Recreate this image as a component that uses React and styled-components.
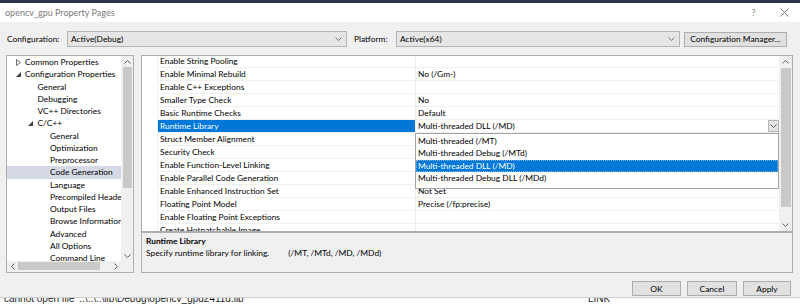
import styled, { createGlobalStyle } from "styled-components"

const GlobalStyle = createGlobalStyle`
  html, body {
    margin: 0;
    padding: 0;
    background: #ffffff;
  }
  body {
    font-family: "Segoe UI", Lato, "Liberation Sans", sans-serif;
    font-size: 8.4px;
    color: #000000;
  }
  * {
    box-sizing: border-box;
  }
`

const Screen = styled.div`
  width: 800px;
  height: 306px;
  overflow: hidden;
  display: flex;
  flex-direction: column;
  background: #ffffff;
`

const HostBar = styled.div`
  flex: none;
  height: 3px;
  background: #2b3649;
`

const Dialog = styled.div`
  flex: none;
  height: 295px;
  display: flex;
  flex-direction: column;
  background: #f0f0f0;
  border-bottom: 1px solid #d2d2d2;
`

const TitleBar = styled.div`
  flex: none;
  height: 19px;
  display: flex;
  align-items: center;
  background: #ffffff;
  padding-left: 5px;
`

const TitleText = styled.div`
  flex: 1;
  font-size: 9px;
  color: #7c7c7c;
`

const TitleButton = styled.div`
  width: 31px;
  height: 19px;
  display: flex;
  align-items: center;
  justify-content: center;
  color: #8a8a8a;
  font-size: 9px;
`

const Body = styled.div`
  flex: 1;
  display: flex;
  flex-direction: column;
  padding: 0 7px 0 6px;
`

const ConfigRow = styled.div`
  flex: none;
  height: 16px;
  margin-top: 9px;
  display: flex;
  align-items: center;
`

const Label = styled.div`
  width: ${p => p.$w}px;
  margin-left: ${p => p.$ml || 0}px;
  padding-left: 1px;
  white-space: nowrap;
`

const Combo = styled.div`
  width: ${p => p.$w}px;
  height: 16px;
  display: flex;
  align-items: center;
  background: #e6e6e6;
  border: 1px solid #b4b4b4;
  padding-left: 3px;
`

const ComboText = styled.div`
  flex: 1;
  white-space: nowrap;
`

const ComboArrow = styled.div`
  width: 16px;
  display: flex;
  justify-content: center;
  align-items: center;
`

const Button = styled.div`
  width: ${p => p.$w}px;
  margin-left: ${p => p.$ml || 0}px;
  height: 15px;
  display: flex;
  align-items: center;
  justify-content: center;
  background: #e1e1e1;
  border: 1px solid #adadad;
  white-space: nowrap;
`

const Main = styled.div`
  flex: none;
  height: 218px;
  margin-top: 8px;
  display: flex;
  gap: 7px;
`

const TreePanel = styled.div`
  width: 128px;
  border: 1px solid #adadad;
  background: #ffffff;
  display: grid;
  grid-template-columns: 1fr 12px;
  grid-template-rows: 1fr 11px;
`

const TreeList = styled.div`
  overflow: hidden;
`

const TreeItem = styled.div`
  height: 12.25px;
  display: flex;
  align-items: center;
  padding-left: ${p => p.$level * 12.5 + 4}px;
  background: ${p => (p.$selected ? "#d6d9e6" : "transparent")};
  white-space: nowrap;
`

const Expander = styled.div`
  width: 14px;
  flex: none;
  display: flex;
  align-items: center;
  justify-content: center;
`

const ScrollV = styled.div`
  display: flex;
  flex-direction: column;
  background: #f0f0f0;
`

const ScrollH = styled.div`
  display: flex;
  align-items: stretch;
  background: #f0f0f0;
`

const ScrollArrow = styled.div`
  flex: none;
  width: ${p => p.$w || "auto"};
  height: ${p => p.$h || "auto"};
  display: flex;
  align-items: center;
  justify-content: center;
`

const Track = styled.div`
  flex: 1;
  display: flex;
  flex-direction: ${p => (p.$horizontal ? "row" : "column")};
`

const Thumb = styled.div`
  flex: none;
  background: #c9c9c9;
  ${p =>
    p.$horizontal
      ? `width: ${p.$size}px; margin: 1px 0 2px 0;`
      : `height: ${p.$size}px; margin: ${p.$offset || 0}px 1px 0 2px;`}
`

const Corner = styled.div`
  background: #f0f0f0;
`

const RightColumn = styled.div`
  flex: 1;
  display: flex;
  flex-direction: column;
`

const GridPanel = styled.div`
  flex: none;
  height: 177px;
  border: 1px solid #adadad;
  background: #ffffff;
  display: flex;
  position: relative;
`

const GridBody = styled.div`
  flex: 1;
  overflow: hidden;
`

const GridRows = styled.div`
  margin-top: -1px;
`

const Row = styled.div`
  height: 13px;
  display: grid;
  grid-template-columns: 15px 258px 1fr;
`

const NameCell = styled.div`
  display: flex;
  align-items: center;
  padding-left: 2px;
  border-left: 1px solid #f0f0f0;
  border-bottom: 1px solid #f0f0f0;
  white-space: nowrap;
  background: ${p => (p.$selected ? "#0078d7" : "transparent")};
  color: ${p => (p.$selected ? "#ffffff" : "#000000")};
`

const ValueCell = styled.div`
  display: flex;
  align-items: center;
  padding-left: 2px;
  border-left: 1px solid #f0f0f0;
  border-bottom: 1px solid #f0f0f0;
  white-space: nowrap;
`

const CellCombo = styled.div`
  width: 11px;
  height: 12px;
  margin-left: auto;
  display: flex;
  align-items: center;
  justify-content: center;
  background: #e5e5e5;
  border: 1px solid #b3b3b3;
`

const GridScroll = styled(ScrollV)`
  width: 13px;
  flex: none;
`

const DropList = styled.div`
  position: absolute;
  left: 273px;
  top: 77px;
  width: 364px;
  height: 56px;
  background: #ffffff;
  border: 1px solid #a3a3a3;
  padding-top: 1px;
`

const DropItem = styled.div`
  height: 12.3px;
  display: flex;
  align-items: center;
  padding-left: 2px;
  white-space: nowrap;
  background: ${p => (p.$active ? "#0078d7" : "transparent")};
  color: ${p => (p.$active ? "#ffffff" : "#000000")};
  outline: ${p => (p.$active ? "1px dotted #7fb6ea" : "none")};
  outline-offset: -1px;
`

const Description = styled.div`
  flex: none;
  height: 41px;
  border: 1px solid #adadad;
  background: #f0f0f0;
  padding: 2px 4px 0 4px;
`

const DescTitle = styled.div`
  height: 12px;
  display: flex;
  align-items: center;
  font-weight: 700;
`

const DescLine = styled.div`
  height: 12px;
  display: flex;
  align-items: center;
  white-space: nowrap;
`

const DescOptions = styled.span`
  margin-left: 19px;
`

const Footer = styled.div`
  flex: none;
  height: 15px;
  margin-top: 8px;
  padding-right: 2px;
  display: flex;
  justify-content: flex-end;
  gap: 6px;
`

const OutputStrip = styled.div`
  flex: 1;
  overflow: hidden;
  display: flex;
  padding-left: 4px;
  font-family: "Liberation Sans", sans-serif;
  font-size: 10px;
  line-height: 10px;
  color: #1e1e1e;
`

const OutputText = styled.div`
  margin-top: -4px;
  width: ${p => p.$w}px;
  white-space: nowrap;
`

const Chevron = ({ dir = "down", color = "#606060" }) => {
  const pts = {
    down: "0.5,0.5 3.5,3.5 6.5,0.5",
    up: "0.5,3.5 3.5,0.5 6.5,3.5",
  }
  const side = {
    left: "3.5,0.5 0.5,3.5 3.5,6.5",
    right: "0.5,0.5 3.5,3.5 0.5,6.5",
  }
  if (side[dir]) {
    return (
      <svg width="4" height="7" viewBox="0 0 4 7">
        <polyline points={side[dir]} fill="none" stroke={color} strokeWidth="1" />
      </svg>
    )
  }
  return (
    <svg width="7" height="4" viewBox="0 0 7 4">
      <polyline points={pts[dir]} fill="none" stroke={color} strokeWidth="1" />
    </svg>
  )
}

const TreeArrow = ({ open }) =>
  open ? (
    <svg width="5" height="5" viewBox="0 0 5 5">
      <polygon points="5,0 5,5 0,5" fill="#404040" />
    </svg>
  ) : (
    <svg width="5" height="7" viewBox="0 0 5 7">
      <polygon points="0.5,0.5 4.5,3.5 0.5,6.5" fill="none" stroke="#707070" strokeWidth="1" />
    </svg>
  )

const treeItems = [
  { label: "Common Properties", level: 0, arrow: "closed" },
  { label: "Configuration Properties", level: 0, arrow: "open" },
  { label: "General", level: 1 },
  { label: "Debugging", level: 1 },
  { label: "VC++ Directories", level: 1 },
  { label: "C/C++", level: 1, arrow: "open" },
  { label: "General", level: 2 },
  { label: "Optimization", level: 2 },
  { label: "Preprocessor", level: 2 },
  { label: "Code Generation", level: 2, selected: true },
  { label: "Language", level: 2 },
  { label: "Precompiled Headers", level: 2 },
  { label: "Output Files", level: 2 },
  { label: "Browse Information", level: 2 },
  { label: "Advanced", level: 2 },
  { label: "All Options", level: 2 },
  { label: "Command Line", level: 2 },
]

const properties = [
  { name: "Enable String Pooling", value: "" },
  { name: "Enable Minimal Rebuild", value: "No (/Gm-)" },
  { name: "Enable C++ Exceptions", value: "" },
  { name: "Smaller Type Check", value: "No" },
  { name: "Basic Runtime Checks", value: "Default" },
  { name: "Runtime Library", value: "Multi-threaded DLL (/MD)", selected: true },
  { name: "Struct Member Alignment", value: "Default" },
  { name: "Security Check", value: "Enable Security Check (/GS)" },
  { name: "Enable Function-Level Linking", value: "" },
  { name: "Enable Parallel Code Generation", value: "" },
  { name: "Enable Enhanced Instruction Set", value: "Not Set" },
  { name: "Floating Point Model", value: "Precise (/fp:precise)" },
  { name: "Enable Floating Point Exceptions", value: "" },
  { name: "Create Hotpatchable Image", value: "" },
]

const runtimeOptions = [
  "Multi-threaded (/MT)",
  "Multi-threaded Debug (/MTd)",
  "Multi-threaded DLL (/MD)",
  "Multi-threaded Debug DLL (/MDd)",
]

const App = () => {
  return (
    <Screen>
      <GlobalStyle />
      <HostBar />
      <Dialog>
        <TitleBar>
          <TitleText>opencv_gpu Property Pages</TitleText>
          <TitleButton>?</TitleButton>
          <TitleButton>
            <svg width="9" height="9" viewBox="0 0 9 9">
              <path d="M0.5 0.5 L8.5 8.5 M8.5 0.5 L0.5 8.5" stroke="#7a7a7a" strokeWidth="1" />
            </svg>
          </TitleButton>
        </TitleBar>

        <Body>
          <ConfigRow>
            <Label $w={61}>Configuration:</Label>
            <Combo $w={280}>
              <ComboText>Active(Debug)</ComboText>
              <ComboArrow><Chevron dir="down" color="#7a7a7a" /></ComboArrow>
            </Combo>
            <Label $w={43} $ml={6}>Platform:</Label>
            <Combo $w={284}>
              <ComboText>Active(x64)</ComboText>
              <ComboArrow><Chevron dir="down" color="#7a7a7a" /></ComboArrow>
            </Combo>
            <Button $w={103} $ml={4}>Configuration Manager...</Button>
          </ConfigRow>

          <Main>
            <TreePanel>
              <TreeList>
                {treeItems.map((item, i) => (
                  <TreeItem key={i} $level={item.level} $selected={item.selected}>
                    <Expander>{item.arrow && <TreeArrow open={item.arrow === "open"} />}</Expander>
                    {item.label}
                  </TreeItem>
                ))}
              </TreeList>
              <ScrollV>
                <ScrollArrow $h="11px"><Chevron dir="up" /></ScrollArrow>
                <Track>
                  <Thumb $size={121} />
                </Track>
                <ScrollArrow $h="11px"><Chevron dir="down" /></ScrollArrow>
              </ScrollV>
              <ScrollH>
                <ScrollArrow $w="11px"><Chevron dir="left" /></ScrollArrow>
                <Track $horizontal>
                  <Thumb $horizontal $size={82} />
                </Track>
                <ScrollArrow $w="11px"><Chevron dir="right" /></ScrollArrow>
              </ScrollH>
              <Corner />
            </TreePanel>

            <RightColumn>
              <GridPanel>
                <GridBody>
                  <GridRows>
                    {properties.map((p, i) => (
                      <Row key={i}>
                        <div />
                        <NameCell $selected={p.selected}>{p.name}</NameCell>
                        <ValueCell>
                          {p.value}
                          {p.selected && (
                            <CellCombo><Chevron dir="down" color="#606060" /></CellCombo>
                          )}
                        </ValueCell>
                      </Row>
                    ))}
                  </GridRows>
                </GridBody>
                <GridScroll>
                  <ScrollArrow $h="11px"><Chevron dir="up" /></ScrollArrow>
                  <Track>
                    <Thumb $size={139} $offset={1} />
                  </Track>
                  <ScrollArrow $h="12px"><Chevron dir="down" /></ScrollArrow>
                </GridScroll>
                <DropList>
                  {runtimeOptions.map((o, i) => (
                    <DropItem key={o} $active={i === 2}>{o}</DropItem>
                  ))}
                </DropList>
              </GridPanel>
              <Description>
                <DescTitle>Runtime Library</DescTitle>
                <DescLine>
                  Specify runtime library for linking.
                  <DescOptions>(/MT, /MTd, /MD, /MDd)</DescOptions>
                </DescLine>
              </Description>
            </RightColumn>
          </Main>

          <Footer>
            <Button $w={49}>OK</Button>
            <Button $w={50}>Cancel</Button>
            <Button $w={48}>Apply</Button>
          </Footer>
        </Body>
      </Dialog>
      <OutputStrip>
        <OutputText $w={584}>cannot open file '..\..\..\lib\Debug\opencv_gpu2411d.lib'</OutputText>
        <OutputText $w={60}>LINK</OutputText>
      </OutputStrip>
    </Screen>
  )
}

export default App
